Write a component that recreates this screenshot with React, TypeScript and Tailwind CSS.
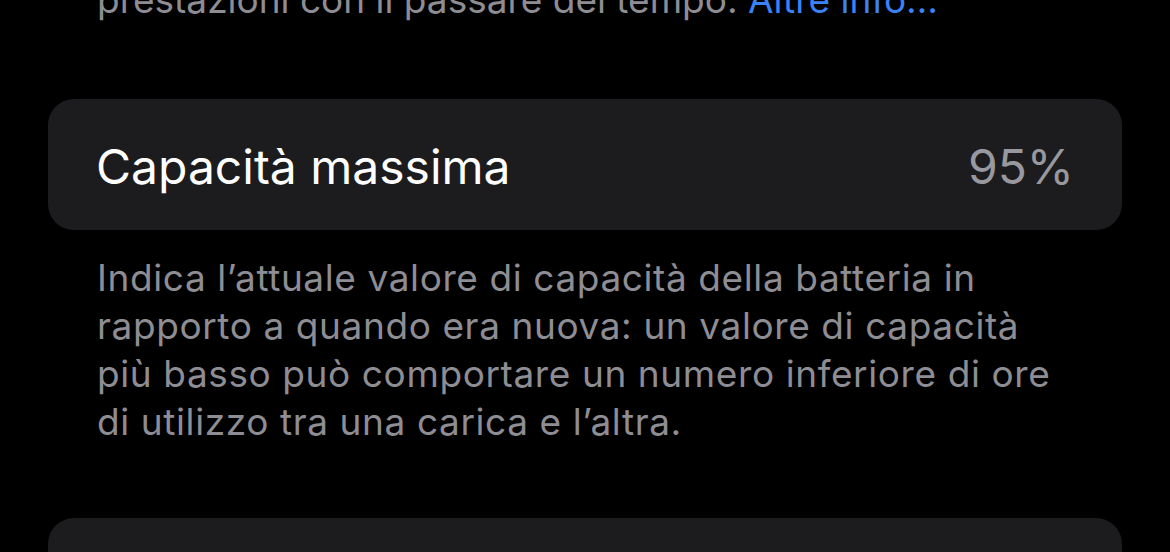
const font = { fontFamily: 'Inter, "Noto Sans", sans-serif' };

export default function App() {
  return (
    <div className="h-[552px] w-[1170px] overflow-hidden bg-black px-[48px]" style={font}>
      <p className="mt-[-24px] whitespace-nowrap px-[49px] text-[37px] leading-[48px] text-[#8d8d93]">
        prestazioni con il passare del tempo. <span className="text-[#3a82f7]">Altre info…</span>
      </p>
      <div className="mt-[75px] flex h-[131px] items-center justify-between rounded-[26px] bg-[#1c1c1e] px-[48px] pt-[4px]">
        <span className="text-[48px] text-white">Capacità massima</span>
        <span className="text-[48px] text-[#98989f]">95%</span>
      </div>
      <p className="mt-[24px] whitespace-nowrap px-[49px] text-[37px] leading-[48px] tracking-[0.6px] text-[#8d8d93]">
        Indica l’attuale valore di capacità della batteria in
        <br />
        rapporto a quando era nuova: un valore di capacità
        <br />
        più basso può comportare un numero inferiore di ore
        <br />
        di utilizzo tra una carica e l’altra.
      </p>
      <div className="mt-[72px] h-[131px] rounded-[26px] bg-[#1c1c1e]" />
    </div>
  );
}
